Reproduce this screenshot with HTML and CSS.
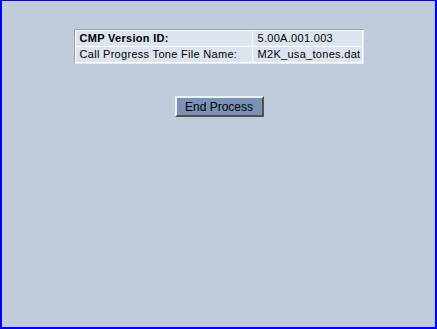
FILE: index.html
```html
<!DOCTYPE html>
<html>
<head>
    <title>CMP</title>
    <link rel="stylesheet" href="styles.css">
</head>
<body>
    <div class="frame">
        <table class="info">
            <tr>
                <td class="label bold">CMP Version ID:</td>
                <td class="value">5.00A.001.003</td>
            </tr>
            <tr>
                <td class="label">Call Progress Tone File Name:</td>
                <td class="value">M2K_usa_tones.dat</td>
            </tr>
        </table>
        <div class="actions">
            <button class="end-btn">End Process</button>
        </div>
    </div>
</body>
</html>
```

FILE: styles.css
```css
html, body {
    margin: 0;
    padding: 0;
    height: 100%;
}

body {
    font-family: "Liberation Sans", Arial, sans-serif;
    font-size: 11px;
    background-color: #c0ccdc;
}

.frame {
    box-sizing: border-box;
    height: 329px;
    border-style: solid;
    border-color: #0000ff;
    border-width: 1px 2px 2px 2px;
    padding-top: 28px;
}

.info {
    margin: 0 auto;
    width: 290px;
    table-layout: fixed;
    border-collapse: separate;
    border-spacing: 1px;
    background-color: #ffffff;
    border: 1px solid #a0a0a0;
    border-right-color: #e8e8e8;
    border-bottom-color: #e8e8e8;
}

.info td {
    background-color: #dce4f0;
    color: #000;
    padding: 1px 2px 2px 4px;
    height: 12px;
    line-height: 12px;
    letter-spacing: 0.3px;
    white-space: nowrap;
    overflow: hidden;
}

.info td.label {
    width: 170px;
}

.info td.value {
    padding-left: 5px;
}

.bold {
    font-weight: bold;
}

.actions {
    margin-top: 32px;
    text-align: center;
}

.end-btn {
    font-family: "Liberation Sans", Arial, sans-serif;
    font-size: 12px;
    width: 89px;
    height: 21px;
    margin-left: 1px;
    padding: 0;
    color: #000;
    background-color: #7b92b7;
    border: 2px solid;
    border-color: #f0f0f0 #505050 #505050 #f0f0f0;
}
```
